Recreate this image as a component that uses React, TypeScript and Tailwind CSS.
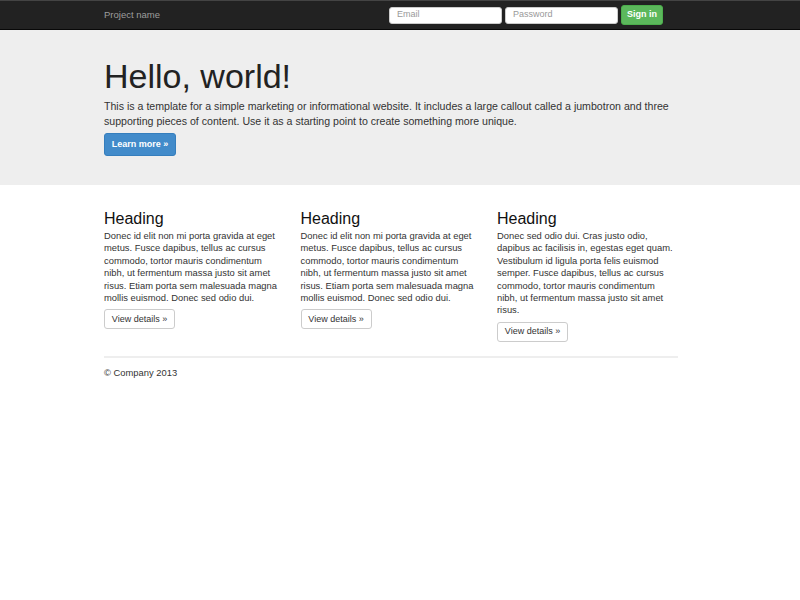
export default function App() {
  const cols = [
    {
      text: "Donec id elit non mi porta gravida at eget metus. Fusce dapibus, tellus ac cursus commodo, tortor mauris condimentum nibh, ut fermentum massa justo sit amet risus. Etiam porta sem malesuada magna mollis euismod. Donec sed odio dui.",
    },
    {
      text: "Donec id elit non mi porta gravida at eget metus. Fusce dapibus, tellus ac cursus commodo, tortor mauris condimentum nibh, ut fermentum massa justo sit amet risus. Etiam porta sem malesuada magna mollis euismod. Donec sed odio dui.",
    },
    {
      text: "Donec sed odio dui. Cras justo odio, dapibus ac facilisis in, egestas eget quam. Vestibulum id ligula porta felis euismod semper. Fusce dapibus, tellus ac cursus commodo, tortor mauris condimentum nibh, ut fermentum massa justo sit amet risus.",
    },
  ];
  return (
    <div className="min-h-[600px] bg-white text-[#333]" style={{ fontFamily: '"Liberation Sans", Arial, sans-serif' }}>
      <div className="h-[30px] bg-[#222] border-t border-[#444] border-b border-b-[#080808]">
        <div className="ml-[104px] w-[559px] h-full flex items-center justify-between">
          <span className="text-[9.5px] text-[#9d9d9d]">Project name</span>
          <div className="flex items-center gap-[3px]">
            <div className="w-[113px] h-[17px] bg-white border border-[#ccc] rounded-[3px] flex items-center pl-[7px] text-[9px] text-[#999]">Email</div>
            <div className="w-[113px] h-[17px] bg-white border border-[#ccc] rounded-[3px] flex items-center pl-[7px] text-[9px] text-[#999]">Password</div>
            <div className="w-[42px] h-[20px] bg-[#5cb85c] border border-[#4cae4c] rounded-[3px] flex items-center justify-center text-[9px] font-bold text-white">Sign in</div>
          </div>
        </div>
      </div>
      <div className="bg-[#eee] h-[155px]">
        <div className="ml-[104px] w-[574px] pt-[26px]">
          <h1 className="text-[34px] leading-[40px] text-[#222]">Hello, world!</h1>
          <p className="text-[10.6px] leading-[15px] text-[#333] mt-[3px]">
            This is a template for a simple marketing or informational website. It includes a large callout called a jumbotron and three supporting pieces of content. Use it as a starting point to create something more unique.
          </p>
          <div className="mt-[4px] w-[72px] h-[23px] bg-[#428bca] border border-[#357ebd] rounded-[3px] flex items-center justify-center text-[9px] font-bold text-white">Learn more »</div>
        </div>
      </div>
      <div className="ml-[104px] w-[574px]">
        <div className="grid grid-cols-[180px_180px_180px] gap-x-[16.5px] pt-[24px]">
          {cols.map((c, i) => (
            <div key={i}>
              <h2 className="text-[16px] leading-[20px] text-[#111]">Heading</h2>
              <p className="text-[9.4px] leading-[12.4px] text-[#333] mt-[1px]">{c.text}</p>
              <div className="mt-[5px] w-[71px] h-[20px] border border-[#ccc] rounded-[3px] flex items-center justify-center text-[9px] text-[#333]">View details »</div>
            </div>
          ))}
        </div>
        <div className="mt-[14px] border-t-2 border-[#eee]"></div>
        <div className="pt-[8px] text-[9.4px] leading-[13px] text-[#333]">© Company 2013</div>
      </div>
    </div>
  );
}
